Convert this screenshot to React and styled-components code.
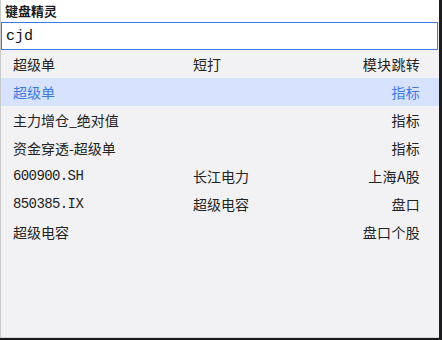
import React from "react";
import styled, { createGlobalStyle } from "styled-components";

const GlobalStyle = createGlobalStyle`
  * { box-sizing: border-box; margin: 0; padding: 0; }
  body {
    background: #1c1c1e;
    font-family: "Noto Sans CJK SC", "Liberation Sans", sans-serif;
    width: 442px;
    height: 340px;
    overflow: hidden;
  }
`;

const rows = [
  { name: "超级单", info: "", kind: "指标", active: true },
  { name: "主力增仓_绝对值", info: "", kind: "指标" },
  { name: "资金穿透-超级单", info: "", kind: "指标" },
  { name: "600900.SH", info: "长江电力", kind: "上海A股", code: true },
  { name: "850385.IX", info: "超级电容", kind: "盘口", code: true },
  { name: "超级电容", info: "", kind: "盘口个股" },
];

function App() {
  return (
    <>
      <GlobalStyle />
      <Panel>
        <TitleBar>键盘精灵</TitleBar>
        <SearchBox value="cjd" readOnly spellCheck={false} />
        <List>
          <Row>
            <Cell>超级单</Cell>
            <Cell>短打</Cell>
            <Kind>模块跳转</Kind>
          </Row>
          {rows.map((r) => (
            <Row key={r.name} $active={r.active}>
              <Cell $code={r.code}>{r.name}</Cell>
              <Cell>{r.info}</Cell>
              <Kind>{r.kind}</Kind>
            </Row>
          ))}
        </List>
      </Panel>
    </>
  );
}

export default App;

const Panel = styled.div`
  width: 439px;
  height: 338px;
  background: #f2f2f4;
  border-left: 1px solid #c9c9cc;
  border-bottom: 1px solid #d4d4d8;
  display: flex;
  flex-direction: column;
`;

const TitleBar = styled.div`
  height: 22px;
  background: #ffffff;
  padding: 2px 0 0 4px;
  font-size: 13px;
  font-weight: 700;
  line-height: 18px;
  color: #1a1a1a;
`;

const SearchBox = styled.input`
  height: 28px;
  width: 437px;
  border: 1px solid #3f7ae0;
  outline: none;
  background: #ffffff;
  padding: 0 4px;
  font-family: "Liberation Mono", monospace;
  font-size: 15px;
  color: #111;
`;

const List = styled.div`
  display: flex;
  flex-direction: column;
`;

const Row = styled.div`
  height: 28px;
  display: grid;
  grid-template-columns: 180px 1fr 120px;
  align-items: center;
  padding: 0 19px 0 12px;
  font-size: 14px;
  color: ${(p) => (p.$active ? "#3d79e6" : "#232323")};
  background: ${(p) => (p.$active ? "#d6e2fe" : "transparent")};
`;

const Cell = styled.span`
  white-space: nowrap;
  font-family: ${(p) =>
    p.$code ? '"Liberation Mono", monospace' : '"Noto Sans CJK SC", sans-serif'};
  font-size: 14px;
  letter-spacing: ${(p) => (p.$code ? "-0.6px" : "0")};
`;

const Kind = styled.span`
  text-align: right;
  white-space: nowrap;
  letter-spacing: 0.3px;
`;
